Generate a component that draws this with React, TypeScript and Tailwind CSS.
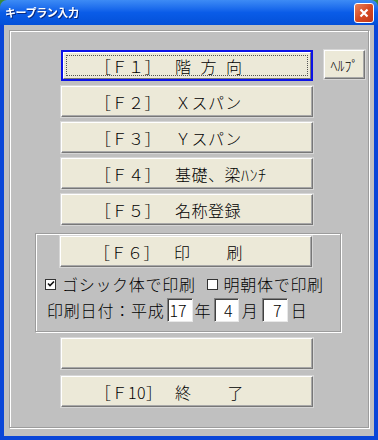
import React from 'react';

const jp = { fontFamily: '"Noto Sans CJK JP", "Noto Sans", sans-serif' };

const face =
  'bg-[#ece9d8] border border-t-white border-l-white border-r-[#777] border-b-[#777] shadow-[inset_-1px_-1px_0_#a8a8a8,0_0_0_1px_#d6d6d6]';

interface BtnProps {
  keyLabel?: string;
  name?: string[];
  gap?: string;
  focused?: boolean;
}

const FuncButton: React.FC<BtnProps> = ({ keyLabel, name = [], gap = 'gap-0', focused }) => {
  const label = keyLabel ? (
    <div className="flex items-center h-full pl-[33px] text-[16px] font-light leading-none text-black tracking-[0.5px]">
      <span className="inline-block w-[80px] whitespace-pre">{keyLabel}</span>
      <span className={`flex ${gap}`}>
        {name.map((c, i) => (
          <span key={i}>{c}</span>
        ))}
      </span>
    </div>
  ) : null;

  if (focused) {
    return (
      <div className="w-[252px] h-[31px] border-2 border-[#0b12e8]">
        <div
          className={`h-full ${face} shadow-none outline-1 outline-dotted outline-[#555] -outline-offset-4`}
        >
          <div className="-ml-[2px] h-full">{label}</div>
        </div>
      </div>
    );
  }

  return <div className={`w-[252px] h-[31px] ${face}`}>{label}</div>;
};

const CheckBox: React.FC<{ checked?: boolean }> = ({ checked }) => (
  <div className="w-[11px] h-[11px] bg-white border border-[#333] flex items-center justify-center">
    {checked && (
      <svg width="8" height="8" viewBox="0 0 8 8">
        <path d="M1 3.5 L3 5.5 L7 1.5" stroke="#111" strokeWidth="1.6" fill="none" />
      </svg>
    )}
  </div>
);

const NumBox: React.FC<{ value: string; w: string }> = ({ value, w }) => (
  <div
    className={`${w} h-[24px] bg-white border border-t-[#808080] border-l-[#808080] border-r-[#e8e8e8] border-b-[#e8e8e8] shadow-[inset_1px_1px_0_#404040] flex items-center justify-end pr-[5px] text-[16px] font-light leading-none`}
  >
    {value}
  </div>
);

export default function App() {
  return (
    <div className="w-[378px] h-[440px] bg-[#3a8a3a] flex flex-col select-none" style={jp}>
      {/* Title bar */}
      <div className="h-[25px] rounded-t-[7px] bg-gradient-to-b from-[#3d8bf5] via-[#0a5ce8] to-[#0450d8] flex items-center pl-[5px] pr-[4px]">
        <span className="text-white text-[11px] font-bold tracking-[-0.4px] leading-none drop-shadow-[1px_1px_0_#0a2a80]">
          キープラン入力
        </span>
        <div className="ml-auto w-[20px] h-[20px] rounded-[3px] border border-white bg-gradient-to-br from-[#e8805a] via-[#d64a22] to-[#c0381a] flex items-center justify-center">
          <svg width="10" height="10" viewBox="0 0 10 10">
            <path d="M1.5 1.5 L8.5 8.5 M8.5 1.5 L1.5 8.5" stroke="#fff" strokeWidth="2.2" />
          </svg>
        </div>
      </div>

      {/* Body */}
      <div className="flex-1 bg-[#c0c0c0] border-x-4 border-b-4 border-[#0a46d8] pl-[5px] pt-[5px]">
        <div className="w-[360px] h-[398px] border border-[#9c9c9c] shadow-[inset_1px_1px_0_#fff,1px_1px_0_#fff] pl-[51px] pt-[19px]">
          <div className="flex items-start">
            <FuncButton focused keyLabel="［Ｆ１］" name={['階', '方', '向']} gap="gap-[9px]" />
            <div
              className={`ml-[11px] w-[41px] h-[29px] ${face} flex items-center justify-center text-[14px] font-light leading-none`}
            >
              ﾍﾙﾌﾟ
            </div>
          </div>

          <div className="flex flex-col gap-[5px] mt-[5px]">
            <FuncButton keyLabel="［Ｆ２］" name={['Ｘスパン']} />
            <FuncButton keyLabel="［Ｆ３］" name={['Ｙスパン']} />
            <FuncButton keyLabel="［Ｆ４］" name={['基礎、梁ﾊﾝﾁ']} />
            <FuncButton keyLabel="［Ｆ５］" name={['名称登録']} />
          </div>

          {/* Print group */}
          <div className="-ml-[26px] mt-[8px] w-[306px] border border-[#9c9c9c] shadow-[inset_1px_1px_0_#fff,1px_1px_0_#fff] pl-[24px] pt-[2px] pb-[9px]">
            <FuncButton keyLabel="［Ｆ６］" name={['印', '刷']} gap="gap-[36px]" />
            <div className="-ml-[15px] mt-[8px] flex items-center h-[18px] text-[16px] font-light leading-none tracking-[0.7px]">
              <CheckBox checked />
              <span className="ml-[6px]">ゴシック体で印刷</span>
              <div className="ml-[11px]">
                <CheckBox />
              </div>
              <span className="ml-[6px]">明朝体で印刷</span>
            </div>
            <div className="-ml-[13px] mt-[5px] flex items-center text-[16px] font-light leading-none">
              <span className="tracking-[0.8px]">印刷日付：平成</span>
              <div className="ml-[2px]">
                <NumBox value="17" w="w-[26px]" />
              </div>
              <span className="ml-[2px]">年</span>
              <div className="ml-[3px]">
                <NumBox value="4" w="w-[25px]" />
              </div>
              <span className="ml-[3px]">月</span>
              <div className="ml-[4px]">
                <NumBox value="7" w="w-[26px]" />
              </div>
              <span className="ml-[3px]">日</span>
            </div>
          </div>

          <div className="mt-[6px]">
            <FuncButton />
          </div>
          <div className="mt-[7px]">
            <FuncButton keyLabel="［Ｆ10］" name={['終', '了']} gap="gap-[36px]" />
          </div>
        </div>
      </div>
    </div>
  );
}
